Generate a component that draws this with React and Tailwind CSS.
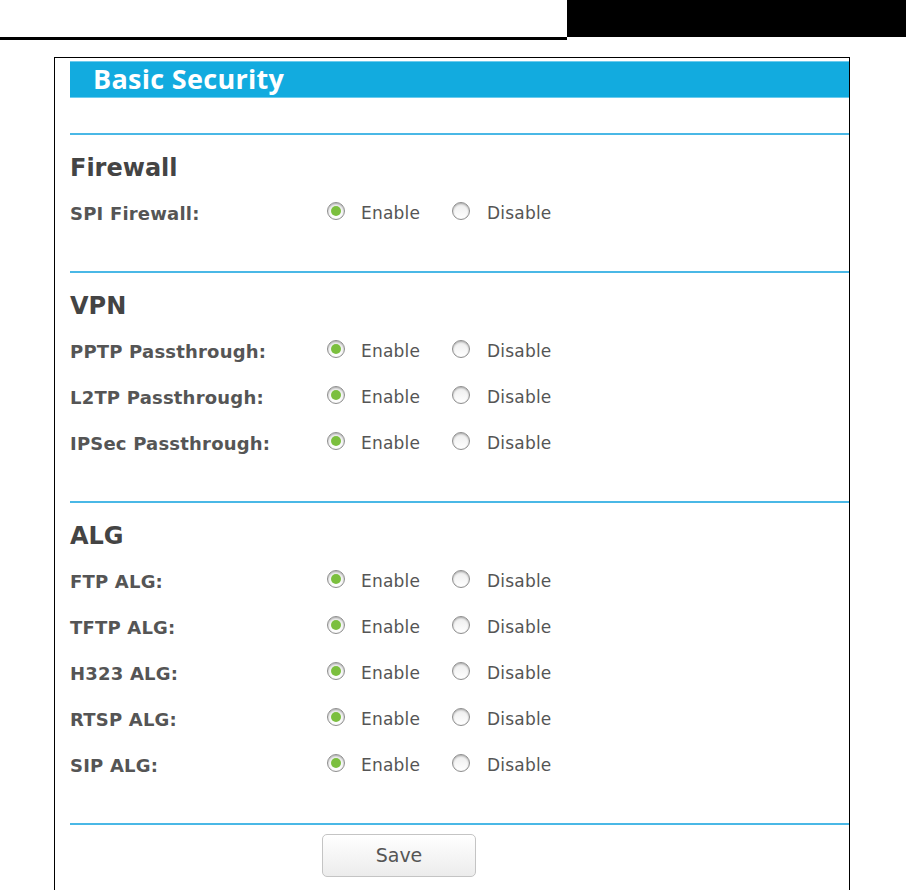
import React from "react";

function Radio({ checked }) {
  return (
    <span className="relative -top-[2px] inline-flex h-[18px] w-[18px] items-center justify-center rounded-full border border-[#8e8e8e] bg-gradient-to-b from-[#ededed] to-white shadow-[inset_0_1px_2px_rgba(0,0,0,0.3)]">
      {checked && <span className="h-[10px] w-[10px] rounded-full bg-[#7bbf3e]" />}
    </span>
  );
}

function Row({ label }) {
  return (
    <div className="flex h-[46px] items-center">
      <div className="w-[257px] text-[18px] font-bold tracking-[0.2px] text-[#555]">{label}</div>
      <div className="flex items-center">
        <Radio checked />
        <span className="relative top-[1px] ml-[16px] w-[91px] text-[17px] tracking-[0.2px] text-[#555]">Enable</span>
        <Radio />
        <span className="relative top-[1px] ml-[17px] text-[17px] tracking-[0.2px] text-[#555]">Disable</span>
      </div>
    </div>
  );
}

function Section({ title, rows }) {
  return (
    <div>
      <div className="h-[2px] bg-[#4ab8e6]" />
      <div className="pb-[35px] pt-[9px]">
        <div className="flex h-[46px] items-center pt-[2px] text-[24px] font-bold text-[#444]">{title}</div>
        {rows.map((r) => (
          <Row key={r} label={r} />
        ))}
      </div>
    </div>
  );
}

export default function App() {
  return (
    <div className="h-[890px] w-[906px] overflow-hidden bg-white" style={{ fontFamily: '"DejaVu Sans", Verdana, sans-serif' }}>
      <div className="flex h-[40px]">
        <div className="w-[567px] border-b-[3px] border-black" />
        <div className="h-[37px] flex-1 bg-black" />
      </div>
      <div className="ml-[54px] mt-[17px] h-[840px] w-[796px] border border-black pl-[15px]">
        <div className="mt-[3px] flex h-[37px] items-center border-y border-[#6ccbee] bg-[#12abdf] pl-[23px]">
          <span className="text-[27px] font-bold tracking-[0.3px] text-white" style={{ fontFamily: '"Open Sans", sans-serif' }}>
            Basic Security
          </span>
        </div>
        <div className="h-[35px]" />
        <Section title="Firewall" rows={["SPI Firewall:"]} />
        <Section title="VPN" rows={["PPTP Passthrough:", "L2TP Passthrough:", "IPSec Passthrough:"]} />
        <Section title="ALG" rows={["FTP ALG:", "TFTP ALG:", "H323 ALG:", "RTSP ALG:", "SIP ALG:"]} />
        <div className="h-[2px] bg-[#4ab8e6]" />
        <div className="pl-[252px] pt-[9px]">
          <button className="h-[43px] w-[154px] rounded-[5px] border border-[#c4c4c4] bg-gradient-to-b from-white to-[#ececec] text-[19px] text-[#555]">
            Save
          </button>
        </div>
      </div>
    </div>
  );
}
